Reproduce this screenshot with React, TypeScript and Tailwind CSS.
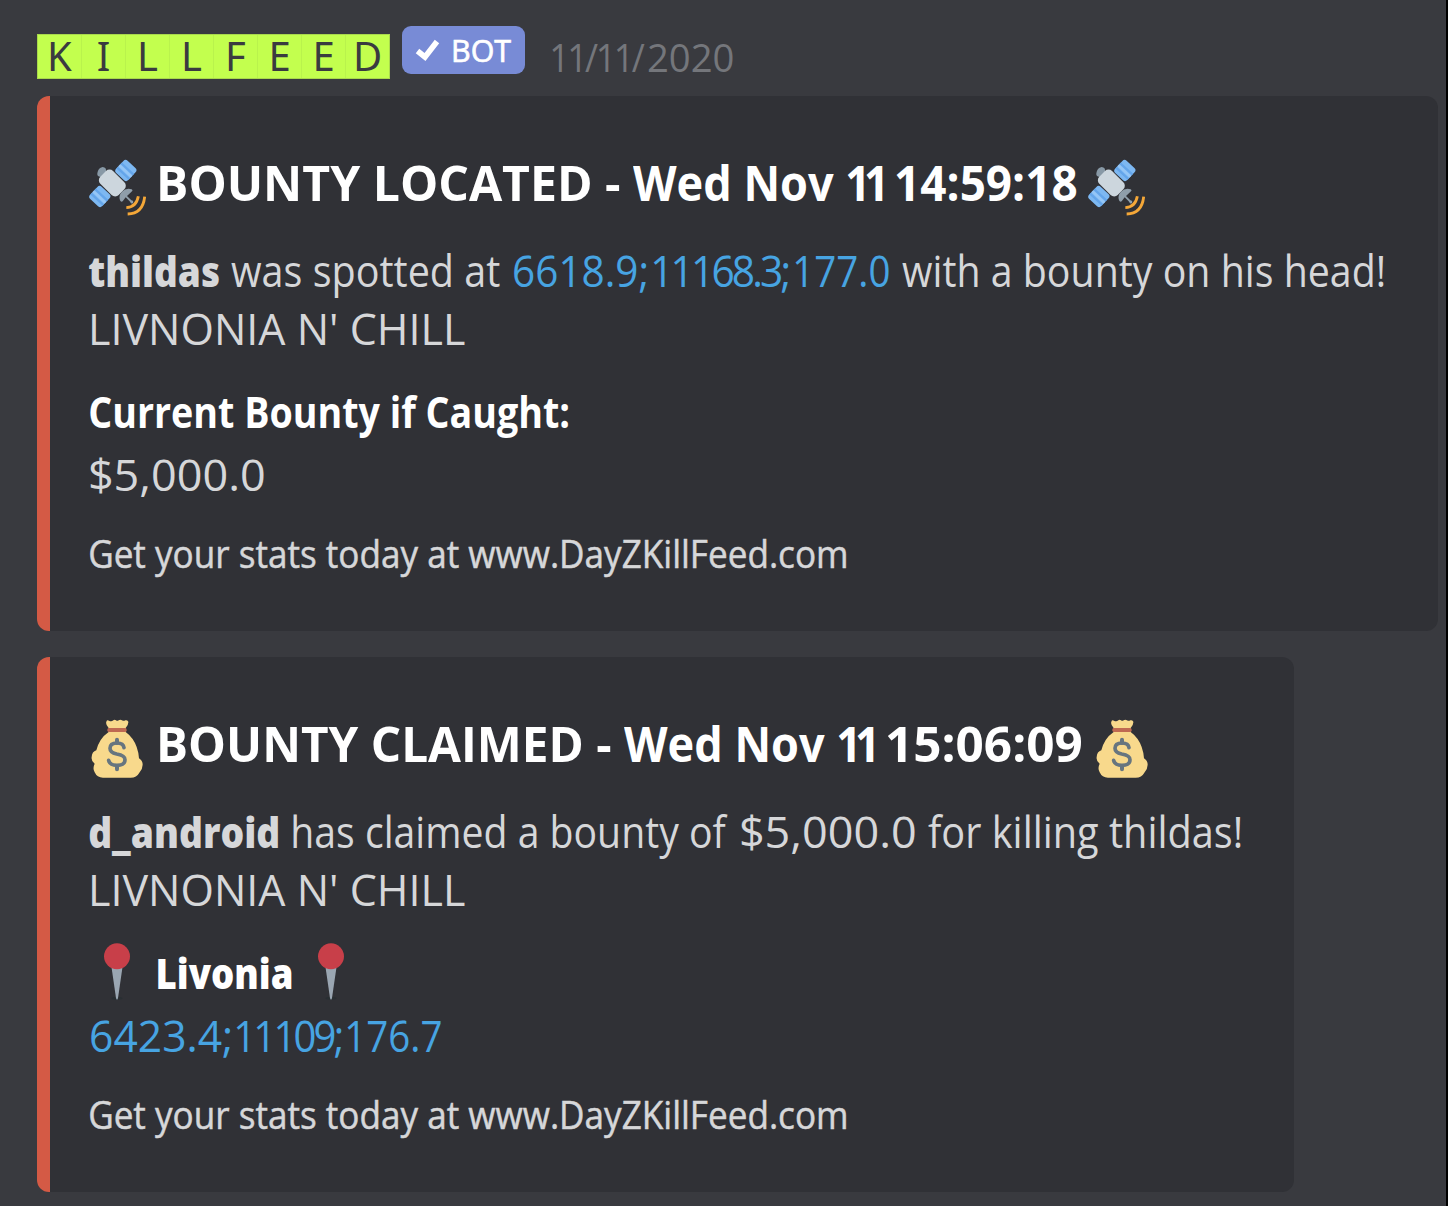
import { useLayoutEffect, useRef, useState, type ReactNode } from 'react';

type FitProps = { children: string; width: number; className?: string };

/** A single line of text whose ink is stretched to span exactly `width` pixels. */
function Fit({ children, width, className = '' }: FitProps) {
  const ref = useRef<HTMLSpanElement>(null);
  const [fit, setFit] = useState({ scale: 1, shift: 0 });
  useLayoutEffect(() => {
    const el = ref.current;
    const ctx = document.createElement('canvas').getContext('2d');
    if (!el || !ctx) return;
    const style = getComputedStyle(el);
    ctx.font = `${style.fontWeight} ${style.fontSize} ${style.fontFamily}`;
    if (style.letterSpacing !== 'normal') ctx.letterSpacing = style.letterSpacing;
    const m = ctx.measureText(children);
    const scale = width / (m.actualBoundingBoxLeft + m.actualBoundingBoxRight);
    setFit({ scale, shift: m.actualBoundingBoxLeft * scale });
  }, [children, width]);
  return (
    <span className="block shrink-0" style={{ width }}>
      <span
        ref={ref}
        className={`block w-max origin-left whitespace-pre ${className}`}
        style={{ transform: `translateX(${fit.shift}px) scaleX(${fit.scale})` }}
      >
        {children}
      </span>
    </span>
  );
}

function Satellite() {
  return (
    <svg viewBox="24 24 174 174" className="size-[58px] shrink-0 translate-y-[5px]" aria-hidden="true">
      <path d="M52 70q2-16 16-19 12 1 10 14l-3 9-12 8-9-4q-3-3-2-8z" fill="#8899a6" />
      <g transform="translate(137.500 61.500) rotate(43)">
        <rect x="-25" y="-25" width="50" height="50" rx="9" fill="#7db8f2" />
        <path d="M-25-10h50v7h-50zM-25 8h50v7h-50z" fill="#64a5ea" />
        <path d="M-25-2h50v8h-50z" fill="#95c6f6" />
      </g>
      <g transform="translate(59.500 139.500) rotate(43)">
        <rect x="-25" y="-25" width="50" height="50" rx="9" fill="#7db8f2" />
        <path d="M-25-10h50v7h-50zM-25 8h50v7h-50z" fill="#64a5ea" />
        <path d="M-25-2h50v8h-50z" fill="#95c6f6" />
      </g>
      <rect x="-39" y="-27" width="78" height="54" rx="15" transform="translate(97 99) rotate(45)" fill="#ccd6dd" />
      <path d="M120 151q-5-14 6-26 12-12 29-7 5 3 1 6l-15 14 13 13q6 0 6 5-1 6-7 4l-4-6-12-12-9 12q-5 4-8-3z" fill="#8f9eaa" />
      <path d="M139 173q30-1 36-34M143 192q46-1 51-52" fill="none" stroke="#f4a738" strokeWidth="8.500" strokeLinecap="butt" />
    </svg>
  );
}

function MoneyBag() {
  return (
    <svg viewBox="24 27 177 177" className="size-[59px] shrink-0 translate-y-[5px]" aria-hidden="true">
      <path
        d="M86 54q-10-10-7-19 2-6 8-3 7 4 13-1 4-3 8 0 4 3 8 0 5-3 10 0 5 3 10 0 7-2 9 4 1 9-8 19v12q23 17 33 45 6 17 7 34 11 7 11 19 0 13-10 24-8 15-26 15H69q-18 0-25-16-7-12 0-26-11-8-9-20 1-16 14-20 9-36 37-55z"
        fill="#f8d98c"
      />
      <rect x="82" y="54" width="58" height="12" rx="5" fill="#bf6952" />
      <path d="M111 89v10M111 170v8" fill="none" stroke="#67757f" strokeWidth="12" strokeLinecap="round" />
      <path
        d="M132 113q-2-14-21-14-21 0-21 16 0 13 20 17 25 4 25 17 0 17-24 17-22 0-25-15"
        fill="none"
        stroke="#67757f"
        strokeWidth="11"
        strokeLinecap="round"
      />
    </svg>
  );
}

function Pin() {
  return (
    <svg viewBox="24 36 174 174" className="size-[58px] shrink-0 -translate-y-[2px]" aria-hidden="true">
      <ellipse cx="111" cy="205" rx="17" ry="4" fill="#292f33" />
      <path d="M94 108h34l-14 96q-3 10-6 0z" fill="#9aa6b2" />
      <circle cx="111" cy="79" r="39" fill="#c83f49" />
    </svg>
  );
}

function Embed({ className, children }: { className: string; children: ReactNode }) {
  return (
    <article
      className={`flex h-[535px] flex-col rounded-[12px] border-l-[13px] border-[#d45a45] bg-[#303136] pt-[53px] pl-[39px] text-[#d6d7d9] ${className}`}
    >
      {children}
      <footer className="mt-[27px] ml-px text-[37.500px] leading-[48px] font-[400] [-webkit-text-stroke:0.5px_#d6d7d9]">
        <Fit width={756}>Get your stats today at www.DayZKillFeed.com</Fit>
      </footer>
    </article>
  );
}

const NAME = ['K', 'I', 'L', 'L', 'F', 'E', 'E', 'D'];

export default function App() {
  return (
    <main className="h-[1206px] w-[1448px] overflow-hidden border-r-2 border-black bg-[#393a3f] pl-[37px] font-['Open_Sans',sans-serif]">
      <header className="flex h-[96px] items-start">
        <div className="mt-[34px] flex h-[45px] w-[353px] border border-[#a9d94c] bg-[#c3ff4e] font-['Noto_Sans',sans-serif] text-[40px] leading-[42px] text-[#3a3b40]">
          {NAME.map((letter, i) => (
            <span key={i} className="flex-1 border-r border-[#b9f34c] text-center last:border-r-0">
              {letter}
            </span>
          ))}
        </div>
        <div className="mt-[26px] ml-[12px] flex h-[48px] w-[123px] items-center rounded-[9px] bg-[#788bd6] pl-[13px] text-[31px] leading-[46px] font-[400] text-white [-webkit-text-stroke:0.7px_#fff]">
          <svg viewBox="0 0 26 24" className="mr-[13px] h-[24px] w-[26px] shrink-0" aria-hidden="true">
            <path d="M2.500 13l7.500 6L22 3.500" fill="none" stroke="currentColor" strokeWidth="5.600" />
          </svg>
          <Fit width={57}>BOT</Fit>
        </div>
        <time className="mt-[33px] ml-[27px] flex gap-[3px] text-[37.500px] leading-[50px] font-[400] text-[#74767b]">
          <Fit width={93} className="tracking-[-2.500px]">11/11/</Fit>
          <Fit width={85}>2020</Fit>
        </time>
      </header>

      <Embed className="w-[1401px]">
        <h2 className="-ml-px flex h-[66px] items-center text-[48.500px] leading-[66px] font-[700] text-white">
          <Satellite />
          <span className="w-[14px]" />
          <span className="flex gap-[13px]">
            <Fit width={460}>BOUNTY LOCATED -</Fit>
            <Fit width={201}>Wed Nov</Fit>
            <Fit width={36} className="tracking-[-7px]">11</Fit>
            <Fit width={180}>14:59:18</Fit>
          </span>
          <span className="w-[11px]" />
          <Satellite />
        </h2>
        <div className="mt-[27px] text-[43px] leading-[57px] font-[400]">
          <p className="flex h-[57px]">
            <Fit width={130} className="font-[800]">thildas</Fit>
            <span className="ml-[12px] flex">
              <Fit width={269}>was spotted at</Fit>
            </span>
            <span className="ml-[14px] flex gap-[6px] text-[#47a4e2]">
              <Fit width={133}>6618.9;</Fit>
              <Fit width={136} className="tracking-[-3px]">11168.3;</Fit>
              <Fit width={94}>177.0</Fit>
            </span>
            <span className="ml-[13px] flex">
              <Fit width={482}>with a bounty on his head!</Fit>
            </span>
          </p>
          <p className="mt-px ml-[3px] h-[57px]">
            <Fit width={373}>LIVNONIA N' CHILL</Fit>
          </p>
        </div>
        <h3 className="mt-[26px] ml-px text-[43px] leading-[57px] font-[700] text-white">
          <Fit width={478}>Current Bounty if Caught:</Fit>
        </h3>
        <p className="mt-[6px] ml-px text-[43px] leading-[57px] font-[400]">
          <Fit width={174}>$5,000.0</Fit>
        </p>
      </Embed>

      <Embed className="mt-[26px] w-[1257px]">
        <h2 className="-ml-px flex h-[66px] items-center text-[48.500px] leading-[66px] font-[700] text-white">
          <MoneyBag />
          <span className="w-[13px]" />
          <span className="flex gap-[13px]">
            <Fit width={451}>BOUNTY CLAIMED -</Fit>
            <Fit width={201}>Wed Nov</Fit>
            <Fit width={36} className="tracking-[-7px]">11</Fit>
            <Fit width={194}>15:06:09</Fit>
          </span>
          <span className="w-[12px]" />
          <MoneyBag />
        </h2>
        <div className="mt-[27px] text-[43px] leading-[57px] font-[400]">
          <p className="flex h-[57px] gap-[13px]">
            <Fit width={189} className="font-[800]">d_android</Fit>
            <span className="ml-[2px] flex">
              <Fit width={435}>has claimed a bounty of</Fit>
            </span>
            <Fit width={174}>$5,000.0</Fit>
            <Fit width={313}>for killing thildas!</Fit>
          </p>
          <p className="mt-px ml-[3px] h-[57px]">
            <Fit width={373}>LIVNONIA N' CHILL</Fit>
          </p>
        </div>
        <h3 className="mt-[26px] -ml-px flex h-[57px] items-center text-[43px] leading-[57px] font-[800] text-white">
          <Pin />
          <span className="w-[12px]" />
          <Fit width={134}>Livonia</Fit>
          <span className="w-[10px]" />
          <Pin />
        </h3>
        <p className="mt-[6px] ml-[2px] flex gap-[5px] text-[43px] leading-[57px] font-[400] text-[#47a4e2]">
          <Fit width={140}>6423.4;</Fit>
          <Fit width={106} className="tracking-[-3px]">11109;</Fit>
          <Fit width={94}>176.7</Fit>
        </p>
      </Embed>
    </main>
  );
}
